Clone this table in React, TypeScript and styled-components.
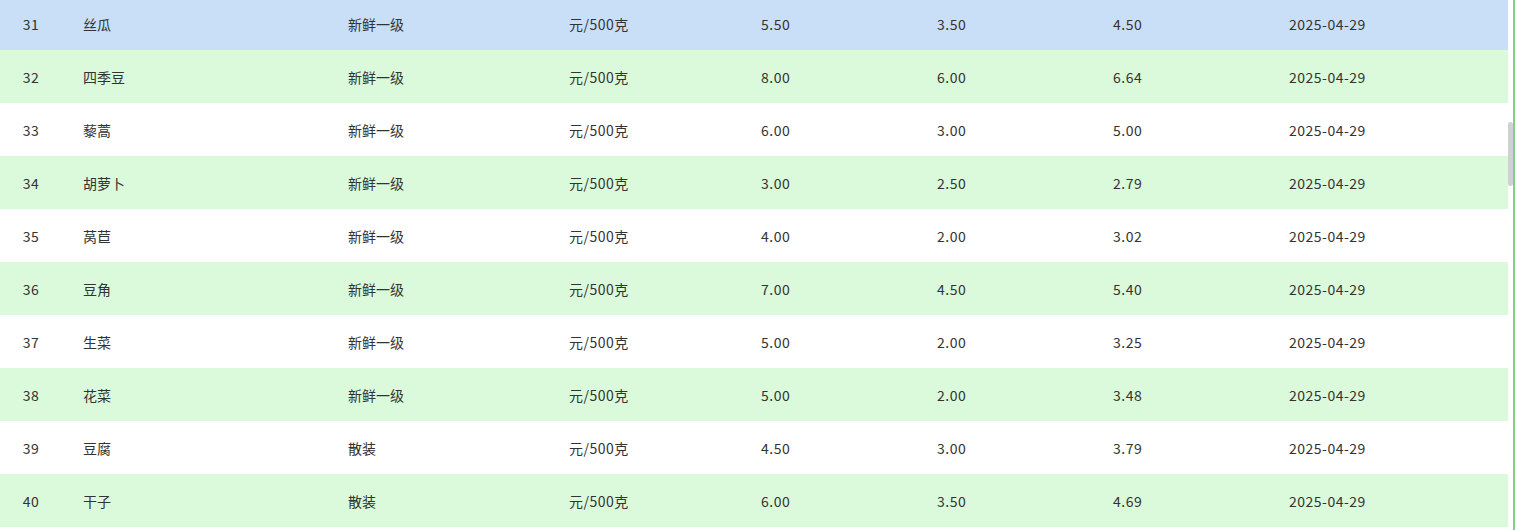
import React from "react";
import styled, { createGlobalStyle } from "styled-components";

const GlobalStyle = createGlobalStyle`
  html, body {
    margin: 0;
    padding: 0;
    background: #ffffff;
  }
  body {
    font-family: "Segoe UI", "Noto Sans CJK SC", "Open Sans", sans-serif;
  }
`;

interface PriceRow {
    no: number;
    name: string;
    grade: string;
    unit: string;
    high: string;
    low: string;
    avg: string;
    date: string;
}

const rows: PriceRow[] = [
    { no: 31, name: "丝瓜", grade: "新鲜一级", unit: "元/500克", high: "5.50", low: "3.50", avg: "4.50", date: "2025-04-29" },
    { no: 32, name: "四季豆", grade: "新鲜一级", unit: "元/500克", high: "8.00", low: "6.00", avg: "6.64", date: "2025-04-29" },
    { no: 33, name: "藜蒿", grade: "新鲜一级", unit: "元/500克", high: "6.00", low: "3.00", avg: "5.00", date: "2025-04-29" },
    { no: 34, name: "胡萝卜", grade: "新鲜一级", unit: "元/500克", high: "3.00", low: "2.50", avg: "2.79", date: "2025-04-29" },
    { no: 35, name: "莴苣", grade: "新鲜一级", unit: "元/500克", high: "4.00", low: "2.00", avg: "3.02", date: "2025-04-29" },
    { no: 36, name: "豆角", grade: "新鲜一级", unit: "元/500克", high: "7.00", low: "4.50", avg: "5.40", date: "2025-04-29" },
    { no: 37, name: "生菜", grade: "新鲜一级", unit: "元/500克", high: "5.00", low: "2.00", avg: "3.25", date: "2025-04-29" },
    { no: 38, name: "花菜", grade: "新鲜一级", unit: "元/500克", high: "5.00", low: "2.00", avg: "3.48", date: "2025-04-29" },
    { no: 39, name: "豆腐", grade: "散装", unit: "元/500克", high: "4.50", low: "3.00", avg: "3.79", date: "2025-04-29" },
    { no: 40, name: "干子", grade: "散装", unit: "元/500克", high: "6.00", low: "3.50", avg: "4.69", date: "2025-04-29" },
];

const Page = styled.div`
    display: flex;
    width: 1515px;
    height: 530px;
    overflow: hidden;
    background: #fff;
`;

const TableBody = styled.div`
    width: 1508px;
    overflow: hidden;
`;

const RowList = styled.div`
    margin-top: -3px;
`;

type Tone = "active" | "stripe" | "plain";

const rowColors: Record<Tone, string> = {
    active: "#c9dff8",
    stripe: "#dafadb",
    plain: "#ffffff",
};

const Row = styled.div<{ $tone: Tone }>`
    display: grid;
    grid-template-columns: 62px 265px 221px 192px 176px 176px 176px 240px;
    height: 53px;
    align-items: center;
    background: ${(p) => rowColors[p.$tone]};
    color: #333333;
    font-size: 14px;
`;

const Cell = styled.div<{ $center?: boolean; $num?: boolean }>`
    padding-left: ${(p) => (p.$center ? "0" : "21px")};
    text-align: ${(p) => (p.$center ? "center" : "left")};
    letter-spacing: ${(p) => (p.$num ? "0.5px" : "0")};
    white-space: nowrap;
    padding-top: 1px;
`;

const ScrollTrack = styled.div`
    width: 5px;
    display: flex;
    flex-direction: column;
    padding-top: 122px;
`;

const ScrollThumb = styled.div`
    width: 5px;
    height: 64px;
    border-radius: 3px;
    background: #d0d1d5;
`;

const EdgeLine = styled.div`
    width: 2px;
    background: #80d089;
`;

export default function App() {
    return (
        <>
            <GlobalStyle />
            <Page>
                <TableBody>
                    <RowList>
                        {rows.map((r, i) => (
                            <Row key={r.no} $tone={i === 0 ? "active" : i % 2 === 1 ? "stripe" : "plain"}>
                                <Cell $center $num>{r.no}</Cell>
                                <Cell>{r.name}</Cell>
                                <Cell>{r.grade}</Cell>
                                <Cell $num>{r.unit}</Cell>
                                <Cell $num>{r.high}</Cell>
                                <Cell $num>{r.low}</Cell>
                                <Cell $num>{r.avg}</Cell>
                                <Cell $num>{r.date}</Cell>
                            </Row>
                        ))}
                    </RowList>
                </TableBody>
                <ScrollTrack>
                    <ScrollThumb />
                </ScrollTrack>
                <EdgeLine />
            </Page>
        </>
    );
}
